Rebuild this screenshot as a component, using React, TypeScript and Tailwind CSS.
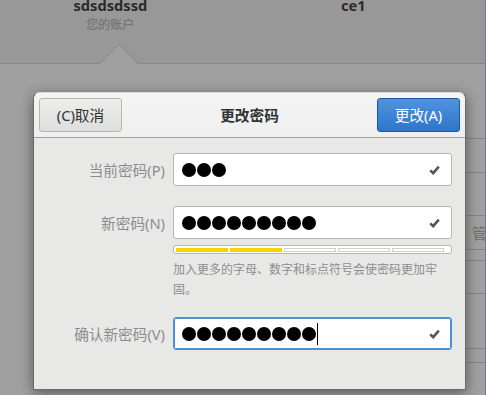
import type { ReactNode } from "react";

const font = { fontFamily: '"Noto Sans", "Noto Sans CJK SC", sans-serif' };

function Dots({ count }: { count: number }) {
  return (
    <div className="flex gap-[1px]">
      {Array.from({ length: count }).map((_, i) => (
        <span key={i} className="block h-[14px] w-[14px] rounded-full bg-black" />
      ))}
    </div>
  );
}

function Check() {
  return (
    <svg width="11" height="10" viewBox="0 0 11 10" className="shrink-0">
      <path d="M1.2 5.4 L4.2 8.2 L9.8 1.6" fill="none" stroke="#555753" strokeWidth="2.6" />
    </svg>
  );
}

function Entry({ count, focused, caret }: { count: number; focused?: boolean; caret?: boolean }) {
  return (
    <div
      className={
        focused
          ? "flex h-[33px] items-center rounded-[3px] border border-[#4a90d9] bg-white pl-[8px] pr-[11px] shadow-[inset_0_0_0_1px_#4a90d9]"
          : "flex h-[33px] items-center rounded-[3px] border border-[#b6b6b3] bg-white pl-[8px] pr-[11px]"
      }
    >
      <Dots count={count} />
      {caret ? <span className="ml-[1px] block h-[22px] w-px bg-black" /> : null}
      <div className="flex-1" />
      <Check />
    </div>
  );
}

function Row({ label, children }: { label: string; children: ReactNode }) {
  return (
    <div className="flex items-center">
      <div className="w-[131px] pr-0 text-right text-[14.67px] leading-[20px] text-[#8b8e8f]">{label}</div>
      <div className="ml-[8px] w-[279px]">{children}</div>
    </div>
  );
}

function Strength() {
  const filled = 2;
  return (
    <div className="flex h-[9px] w-[279px] items-center gap-[2px] rounded-[3px] border border-[#b6b6b3] bg-white pl-[2px] pr-[7px]">
      {[0, 1, 2, 3, 4].map((i) =>
        i < filled ? (
          <span key={i} className="block h-[4px] w-[52px] bg-[#f8d200]" />
        ) : (
          <span key={i} className="block h-[4px] w-[52px] border border-[#d0d0ce] bg-white" />
        )
      )}
    </div>
  );
}

export default function App() {
  return (
    <div className="relative h-[395px] w-[486px] overflow-hidden bg-[#a0a0a0]" style={font}>
      {/* dimmed window behind */}
      <div className="flex h-[64px] border-b border-[#878787] bg-[#989898] text-center">
        <div className="w-[238px] -mt-[4px]">
          <div className="text-[14.67px] font-bold leading-[18px] text-[#2b2b2b]">sdsdsdssd</div>
          <div className="mt-[3px] text-[12px] leading-[16px] text-[#6e6e6e]">您的账户</div>
        </div>
        <div className="w-[286px] -mt-[4px]">
          <div className="text-[14.67px] font-bold leading-[18px] text-[#2b2b2b]">ce1</div>
        </div>
      </div>
      <svg className="absolute left-[100px] top-[44px]" width="39" height="21" viewBox="0 0 39 21">
        <polygon points="0,20 19,0.5 38,20" fill="#a0a0a0" />
        <polyline points="0,19.5 19,0.5 38,19.5" fill="none" stroke="#878787" strokeWidth="1" />
      </svg>
      <div className="ml-[300px] flex flex-col text-[#6e6e6e]">
        <div className="h-[75px] border-b border-[#868686]" />
        <div className="h-[34px] border-b border-[#868686]" />
        <div className="h-[43px] border-b border-[#868686]" />
        <div className="flex h-[34px] items-center border-b border-[#868686] pl-[172px] text-[14.67px] whitespace-nowrap">管理</div>
        <div className="h-[11px] border-b border-[#868686]" />
        <div className="h-[33px] border-b border-[#868686]" />
        <div className="h-[55px] border-b border-[#868686]" />
        <div className="h-[14px] border-b border-[#868686]" />
      </div>
      <div className="absolute right-0 top-0 h-full w-px bg-[#5f7fa6]" />

      {/* dialog */}
      <div className="absolute left-[33px] top-[92px] flex h-[298px] w-[433px] flex-col overflow-hidden rounded-t-[7px] border border-[#6b6b6b] border-t-[#d8d8d8] bg-[#e8e8e7] shadow-[0_3px_14px_rgba(0,0,0,0.45)]">
        <div className="flex h-[45px] items-center justify-between border-b border-[#a2a29f] bg-gradient-to-b from-[#f4f4f4] to-[#efefef] px-[5px]">
          <button className="h-[34px] w-[83px] rounded-[3px] border border-[#b6b6b3] bg-gradient-to-b from-[#ededec] to-[#dededc] text-[14.67px] text-[#2e3436]">
            (C)取消
          </button>
          <div className="text-[14.67px] font-bold text-[#2e3436]">更改密码</div>
          <button className="h-[34px] w-[83px] rounded-[3px] border border-[#1c5aa6] bg-gradient-to-b from-[#4f93de] to-[#2e76c9] text-[14.67px] text-white">
            更改(A)
          </button>
        </div>
        <div className="flex flex-col pt-[15px]">
          <Row label="当前密码(P)">
            <Entry count={3} />
          </Row>
          <div className="mt-[20px]">
            <Row label="新密码(N)">
              <Entry count={9} />
            </Row>
          </div>
          <div className="ml-[139px] mt-[6px]">
            <Strength />
            <p className="mt-[6px] w-[272px] text-[12px] leading-[20px] text-[#8b8e8f]">
              加入更多的字母、数字和标点符号会使密码更加牢固。
            </p>
          </div>
          <div className="mt-[17px]">
            <Row label="确认新密码(V)">
              <Entry count={9} focused caret />
            </Row>
          </div>
        </div>
      </div>
    </div>
  );
}
